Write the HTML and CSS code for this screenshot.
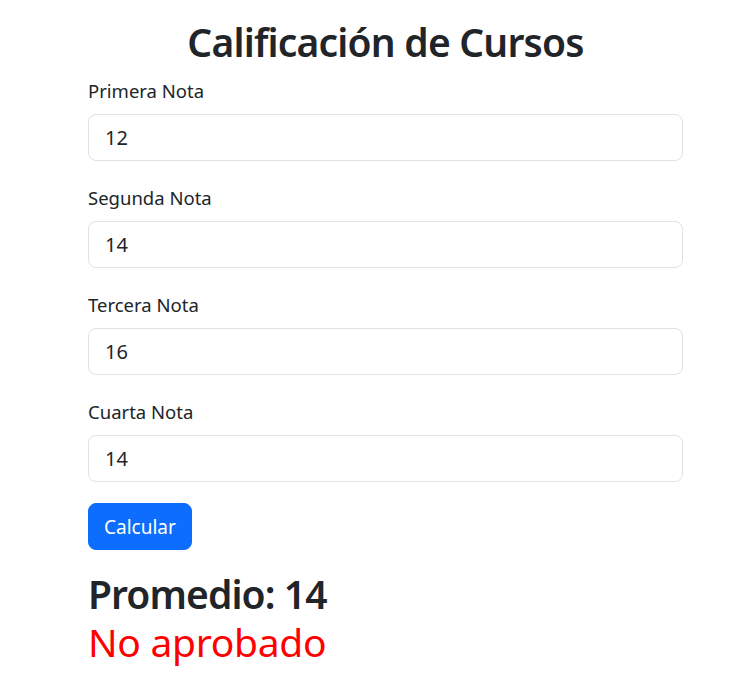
FILE: index.html
```html
<!DOCTYPE html>
<html lang="es">
<head>
<meta charset="utf-8">
<title>Calificación de Cursos</title>
<link rel="stylesheet" href="styles.css">
</head>
<body>
<main class="container">
  <h1 class="title">Calificación de Cursos</h1>
  <form class="form">
    <div class="field">
      <label class="label" for="n1">Primera Nota</label>
      <input class="input" id="n1" type="text" value="12">
    </div>
    <div class="field">
      <label class="label" for="n2">Segunda Nota</label>
      <input class="input" id="n2" type="text" value="14">
    </div>
    <div class="field">
      <label class="label" for="n3">Tercera Nota</label>
      <input class="input" id="n3" type="text" value="16">
    </div>
    <div class="field">
      <label class="label" for="n4">Cuarta Nota</label>
      <input class="input" id="n4" type="text" value="14">
    </div>
    <button class="btn" type="button">Calcular</button>
  </form>
  <div class="result">
    <h2 class="avg">Promedio: 14</h2>
    <h2 class="status">No aprobado</h2>
  </div>
</main>
</body>
</html>
```

FILE: styles.css
```css
* { box-sizing: border-box; }
body {
  margin: 0;
  font-family: "Noto Sans", "Open Sans", sans-serif;
  color: #212529;
  background: #fff;
}
.container {
  width: 595px;
  margin-left: 88px;
  padding-top: 18px;
}
.title {
  margin: 0 0 13px;
  font-size: 39px;
  line-height: 48px;
  font-weight: 600;
  letter-spacing: -0.8px;
  text-align: center;
}
.form {
  display: flex;
  flex-direction: column;
  align-items: flex-start;
}
.field {
  display: flex;
  flex-direction: column;
  width: 100%;
  margin-bottom: 21px;
}
.field + .field { margin-top: 4px; }
.label {
  font-size: 18.5px;
  line-height: 24px;
  margin-bottom: 11px;
}
.input {
  width: 100%;
  height: 47px;
  padding: 0 16px;
  font-family: inherit;
  font-size: 20px;
  color: #212529;
  border: 1px solid #dee2e6;
  border-radius: 8px;
  background: #fff;
}
.btn {
  height: 47px;
  padding: 0 15px;
  font-family: inherit;
  font-size: 19px;
  color: #fff;
  background: #0d6efd;
  border: 1px solid #0d6efd;
  border-radius: 8px;
}
.result { margin-top: 20px; }
.avg, .status {
  margin: 0;
  font-size: 39px;
  line-height: 48px;
  font-weight: 600;
  letter-spacing: -0.9px;
}
.status {
  font-weight: 400;
  letter-spacing: -0.3px;
  color: #ff0000;
}
```
